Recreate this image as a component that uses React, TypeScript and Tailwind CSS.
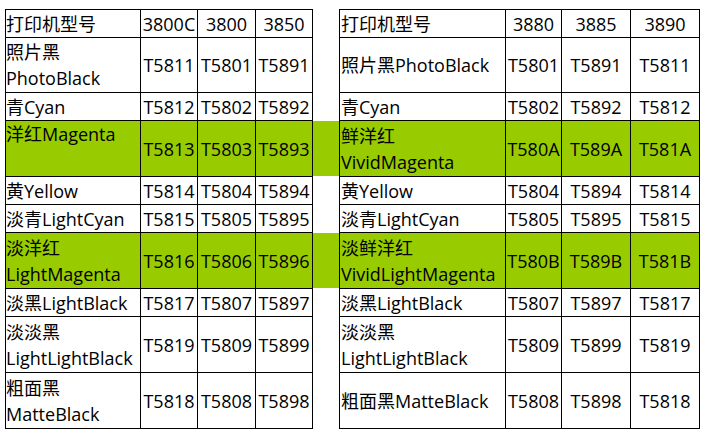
import React from "react";

type Row = {
  l: React.ReactNode;
  lv: string[];
  r: React.ReactNode;
  rv: string[];
  green?: boolean;
  lTop?: boolean;
};

const rows: Row[] = [
  { l: "打印机型号", lv: ["3800C", "3800", "3850"], r: "打印机型号", rv: ["3880", "3885", "3890"] },
  { l: <>照片黑<br />PhotoBlack</>, lv: ["T5811", "T5801", "T5891"], r: "照片黑PhotoBlack", rv: ["T5801", "T5891", "T5811"] },
  { l: "青Cyan", lv: ["T5812", "T5802", "T5892"], r: "青Cyan", rv: ["T5802", "T5892", "T5812"] },
  { l: "洋红Magenta", lv: ["T5813", "T5803", "T5893"], r: <>鲜洋红<br />VividMagenta</>, rv: ["T580A", "T589A", "T581A"], green: true, lTop: true },
  { l: "黄Yellow", lv: ["T5814", "T5804", "T5894"], r: "黄Yellow", rv: ["T5804", "T5894", "T5814"] },
  { l: "淡青LightCyan", lv: ["T5815", "T5805", "T5895"], r: "淡青LightCyan", rv: ["T5805", "T5895", "T5815"] },
  { l: <>淡洋红<br />LightMagenta</>, lv: ["T5816", "T5806", "T5896"], r: <>淡鲜洋红<br />VividLightMagenta</>, rv: ["T580B", "T589B", "T581B"], green: true },
  { l: "淡黑LightBlack", lv: ["T5817", "T5807", "T5897"], r: "淡黑LightBlack", rv: ["T5807", "T5897", "T5817"] },
  { l: <>淡淡黑<br />LightLightBlack</>, lv: ["T5819", "T5809", "T5899"], r: <>淡淡黑<br />LightLightBlack</>, rv: ["T5809", "T5899", "T5819"] },
  { l: <>粗面黑<br />MatteBlack</>, lv: ["T5818", "T5808", "T5898"], r: "粗面黑MatteBlack", rv: ["T5808", "T5898", "T5818"] },
];

const rowsTpl = "grid-rows-[27px_54px_27px_55px_27px_27px_55px_27px_55px_55px]";

function Table({ side }: { side: "l" | "r" }) {
  const cols =
    side === "l"
      ? "grid-cols-[134px_56px_57px_56px]"
      : "grid-cols-[165px_55px_68px_68px]";
  return (
    <div className={`grid ${cols} ${rowsTpl} gap-px p-px bg-black`}>
      {rows.map((row, i) => {
        const bg = row.green ? "bg-[#99cc00]" : "bg-white";
        const label = side === "l" ? row.l : row.r;
        const vals = side === "l" ? row.lv : row.rv;
        const top = side === "l" && row.lTop;
        return (
          <React.Fragment key={i}>
            <div
              className={`${bg} flex ${top ? "items-start" : "items-center"} whitespace-nowrap leading-[26px] ${side === "r" ? "pl-px" : ""}`}
            >
              <span>{label}</span>
            </div>
            {vals.map((v, j) => (
              <div
                key={j}
                className={`${bg} flex items-center justify-center whitespace-nowrap leading-[26px]`}
              >
                {v}
              </div>
            ))}
          </React.Fragment>
        );
      })}
    </div>
  );
}

export default function App() {
  return (
    <div
      className="w-[710px] h-[435px] bg-white pl-[5px] pt-[9px] text-[18px] text-black flex items-start"
      style={{ fontFamily: '"Open Sans", "Noto Sans CJK SC", sans-serif' }}
    >
      <Table side="l" />
      <div className={`grid w-[26px] ${rowsTpl} gap-px py-px`}>
        {rows.map((row, i) => (
          <div key={i} className={row.green ? "bg-[#99cc00]" : "bg-white"} />
        ))}
      </div>
      <Table side="r" />
    </div>
  );
}
